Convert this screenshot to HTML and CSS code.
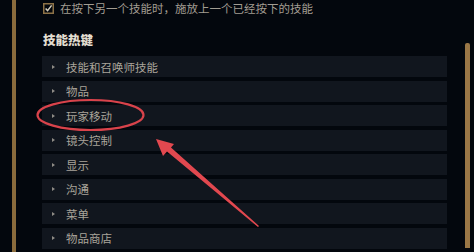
FILE: index.html
```html
<!DOCTYPE html>
<html lang="zh">
<head>
<meta charset="utf-8">
<link rel="stylesheet" href="styles.css">
</head>
<body>
<div class="frame">
  <div class="rail"></div>
  <div class="content">
    <div class="option">
      <svg class="check" width="11" height="11" viewBox="0 0 11 11">
        <rect x="0.75" y="0.75" width="9.5" height="9.5" fill="none" stroke="#8d7247" stroke-width="1.5"/>
        <path d="M2.6 5.4 L4.6 7.6 L8.6 2.4" fill="none" stroke="#d6cfbf" stroke-width="1.5"/>
      </svg>
      <span class="option-text">在按下另一个技能时，施放上一个已经按下的技能</span>
    </div>
    <div class="heading">技能热键</div>
    <div class="list">
      <div class="row"><span class="bullet"></span>技能和召唤师技能</div>
      <div class="row"><span class="bullet"></span>物品</div>
      <div class="row"><span class="bullet"></span>玩家移动</div>
      <div class="row"><span class="bullet"></span>镜头控制</div>
      <div class="row"><span class="bullet"></span>显示</div>
      <div class="row"><span class="bullet"></span>沟通</div>
      <div class="row"><span class="bullet"></span>菜单</div>
      <div class="row"><span class="bullet"></span>物品商店</div>
    </div>
  </div>
  <div class="scroll"><div class="thumb"></div></div>
  <svg class="annotation" width="474" height="252" viewBox="0 0 474 252">
    <ellipse cx="90.5" cy="115" rx="53" ry="15" fill="none" stroke="#d9434b" stroke-width="2.2"/>
    <path d="M259 226 L171 147.5 L174 144 L156 139 L163 156 L167 151.5 L258 227 Z" fill="#e2484f"/>
  </svg>
</div>
</body>
</html>
```
FILE: styles.css
```css
html, body {
  margin: 0;
  padding: 0;
  background: #03070d;
}
body {
  width: 474px;
  height: 252px;
  overflow: hidden;
  font-family: "Noto Sans CJK SC", "Noto Sans", sans-serif;
}
.frame {
  position: relative;
  display: flex;
  height: 252px;
}
.rail {
  width: 4px;
  margin-left: 12px;
  background: #8a6b3c;
  flex: none;
}
.content {
  width: 405px;
  margin-left: 26px;
  flex: none;
}
.option {
  display: flex;
  align-items: center;
  height: 16px;
  margin-left: 1px;
}
.check {
  flex: none;
}
.option-text {
  margin-left: 6px;
  font-size: 11.5px;
  color: #a29d92;
  line-height: 16px;
}
.heading {
  margin-top: 16px;
  margin-left: 1px;
  font-size: 12.5px;
  font-weight: 900;
  color: #e2ddd0;
  line-height: 16px;
}
.list {
  margin-top: 8px;
  display: flex;
  flex-direction: column;
  gap: 3.57px;
}
.row {
  height: 21px;
  display: flex;
  align-items: center;
  background: #11161e;
  font-size: 11.5px;
  color: #a9a49a;
}
.bullet {
  width: 0;
  height: 0;
  border-top: 2px solid transparent;
  border-bottom: 2px solid transparent;
  border-left: 3px solid #8f8c86;
  margin-left: 10px;
  margin-right: 11px;
}
.scroll {
  margin-left: 18px;
  width: 5px;
  flex: none;
  padding-top: 43px;
}
.thumb {
  height: 205px;
  background: #9a7746;
  border-radius: 2px 2px 0 0;
}
.annotation {
  position: absolute;
  left: 0;
  top: 0;
  pointer-events: none;
}
```
